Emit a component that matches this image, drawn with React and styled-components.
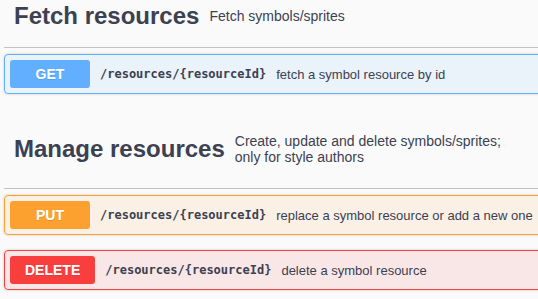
import React from "react";
import styled, { createGlobalStyle } from "styled-components";

const GlobalStyle = createGlobalStyle`
  html, body {
    margin: 0;
    padding: 0;
    background: #fafafa;
    overflow: hidden;
  }
  body {
    font-family: "Liberation Sans", Arial, sans-serif;
    color: #3b4151;
  }
`;

const methods = {
  get: { main: "#61affe", soft: "rgba(97, 175, 254, 0.1)" },
  put: { main: "#fca130", soft: "rgba(252, 161, 48, 0.1)" },
  delete: { main: "#f93e3e", soft: "rgba(249, 62, 62, 0.1)" },
};

const Page = styled.div`
  width: 620px;
  padding-left: 4px;
  margin-top: -16px;
`;

const TagSection = styled.section`
  display: flex;
  flex-direction: column;
`;

const TagHeader = styled.h3`
  display: flex;
  align-items: center;
  margin: 0 0 6px;
  padding: 24px 20px 23px 10px;
  border-bottom: 1px solid rgba(59, 65, 81, 0.3);
  font-weight: normal;
`;

const TagName = styled.span`
  font-size: 24px;
  font-weight: bold;
  line-height: 16px;
  color: #3b4151;
  white-space: nowrap;
`;

const TagDescription = styled.small`
  font-size: 14px;
  line-height: 16px;
  padding: 0 10px;
  max-width: 272px;
  color: #3b4151;
`;

const Opblock = styled.div`
  display: flex;
  align-items: center;
  margin: 0 0 15px;
  padding: 5px;
  border: 1px solid ${(p) => methods[p.$method].main};
  border-radius: 4px;
  background: ${(p) => methods[p.$method].soft};
  box-shadow: 0 0 3px rgba(0, 0, 0, 0.19);
`;

const MethodBadge = styled.span`
  min-width: 80px;
  box-sizing: border-box;
  padding: 6px 15px;
  border-radius: 3px;
  background: ${(p) => methods[p.$method].main};
  color: #fff;
  font-size: 14px;
  font-weight: bold;
  line-height: 16px;
  text-align: center;
  text-shadow: 0 1px 0 rgba(0, 0, 0, 0.1);
`;

const Path = styled.span`
  padding: 0 10px;
  font-family: "DejaVu Sans Mono", "Liberation Mono", monospace;
  font-size: 12px;
  font-weight: bold;
  color: #3b4151;
  white-space: nowrap;
`;

const Summary = styled.span`
  font-size: 13px;
  color: #3b4151;
  white-space: nowrap;
`;

const Operation = ({ method, path, summary }) => (
  <Opblock $method={method}>
    <MethodBadge $method={method}>{method.toUpperCase()}</MethodBadge>
    <Path>{path}</Path>
    <Summary>{summary}</Summary>
  </Opblock>
);

const App = () => {
  return (
    <>
      <GlobalStyle />
      <Page>
        <TagSection>
          <TagHeader>
            <TagName>Fetch resources</TagName>
            <TagDescription>Fetch symbols/sprites</TagDescription>
          </TagHeader>
          <Operation
            method="get"
            path="/resources/{resourceId}"
            summary="fetch a symbol resource by id"
          />
        </TagSection>
        <TagSection>
          <TagHeader>
            <TagName>Manage resources</TagName>
            <TagDescription>
              Create, update and delete symbols/sprites; only for style authors
            </TagDescription>
          </TagHeader>
          <Operation
            method="put"
            path="/resources/{resourceId}"
            summary="replace a symbol resource or add a new one"
          />
          <Operation
            method="delete"
            path="/resources/{resourceId}"
            summary="delete a symbol resource"
          />
        </TagSection>
      </Page>
    </>
  );
};

export default App;
